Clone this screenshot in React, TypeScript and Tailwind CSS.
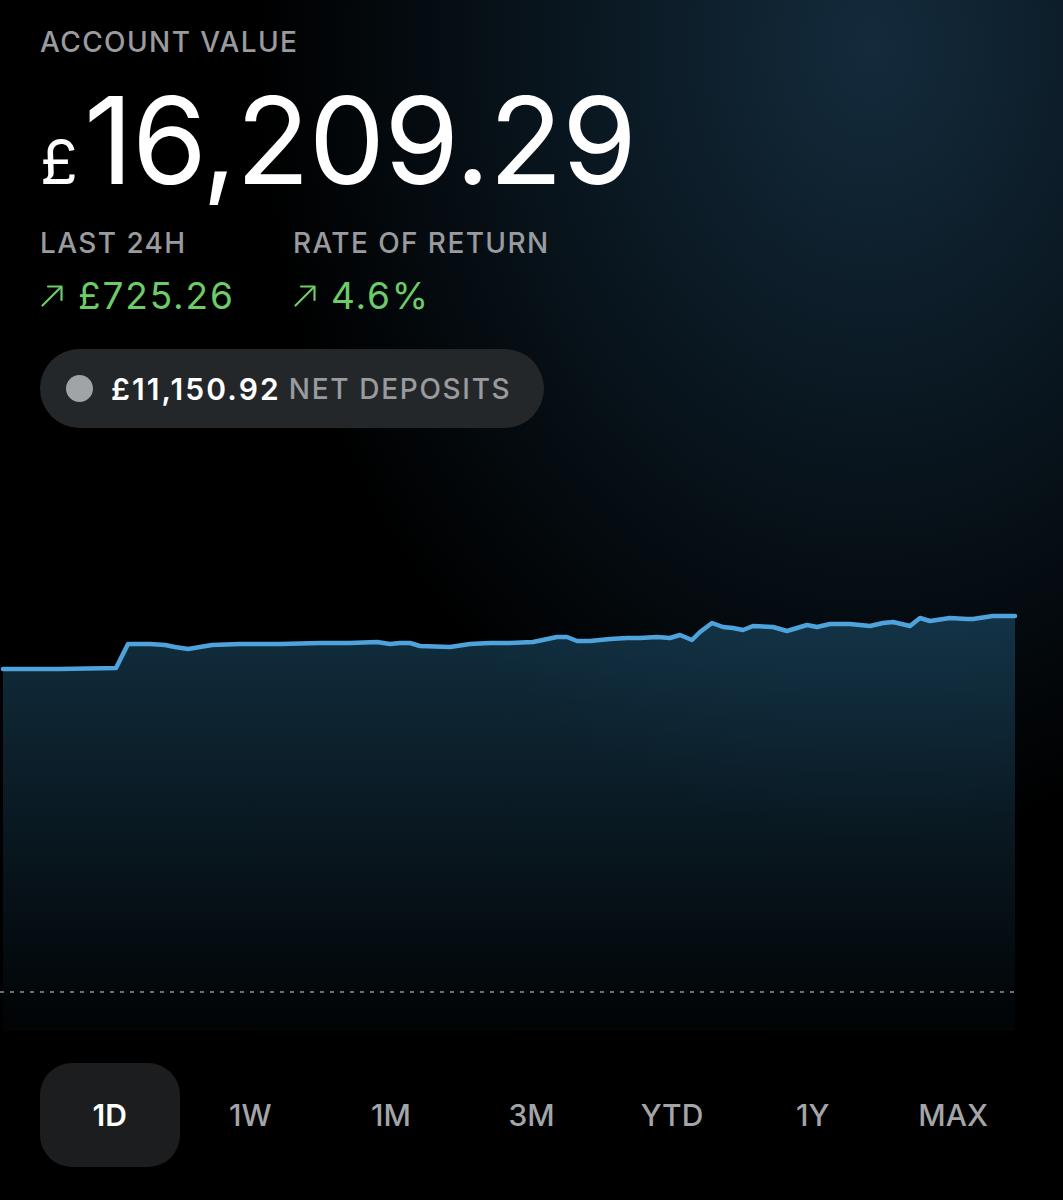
import React from "react";

const line: [number, number][] = [
  [3, 668], [60, 668], [116, 667], [128, 643], [150, 643], [165, 644], [175, 646], [188, 648],
  [200, 646], [212, 644], [240, 643], [280, 643], [320, 642], [350, 642], [377, 641], [390, 643],
  [400, 642], [410, 642], [420, 645], [450, 646], [470, 643], [490, 642], [510, 642], [533, 641],
  [557, 636], [567, 636], [577, 640], [590, 640], [610, 638], [627, 637], [640, 637], [657, 636],
  [670, 637], [680, 634], [692, 639], [700, 631], [712, 622], [723, 626], [733, 627], [743, 629],
  [753, 625], [773, 626], [787, 630], [807, 624], [817, 626], [830, 623], [850, 623], [870, 625],
  [883, 622], [893, 621], [910, 625], [920, 617], [930, 620], [950, 617], [967, 618], [973, 618],
  [993, 615], [1015, 615],
];

const pts = line.map(([x, y]) => `${x},${y}`).join(" ");
const area = `M3,1030 L${line.map(([x, y]) => `${x},${y}`).join(" L")} L1015,1030 Z`;

const Arrow = () => (
  <svg width="24" height="24" viewBox="0 0 24 24" fill="none" stroke="currentColor" strokeWidth="2.2" strokeLinecap="round" strokeLinejoin="round">
    <path d="M2.5 21.5 L21 3" />
    <path d="M8 2.5 H21.5 V16" />
  </svg>
);

const tabs = ["1D", "1W", "1M", "3M", "YTD", "1Y", "MAX"];

export default function App() {
  return (
    <div
      className="w-[1063px] h-[1200px] overflow-hidden bg-black bg-[radial-gradient(ellipse_58%_66%_at_82%_4%,#142b3c_0%,#0a1822_45%,#000_100%)] text-white"
      style={{ fontFamily: "Inter, 'Noto Sans', sans-serif" }}
    >
      <div className="pl-[40px] pt-[28px]">
        <div className="text-[28px] leading-none font-medium text-[#9a9b9e] tracking-[0.05em]">ACCOUNT VALUE</div>

        <div className="mt-[24px] flex items-baseline leading-none">
          <span className="text-[62px] mr-[6px]">£</span>
          <span className="text-[121px] tracking-[-0.008em]">16,209.29</span>
        </div>

        <div className="mt-[28px] flex">
          <div className="w-[253px]">
            <div className="text-[28px] leading-none font-medium text-[#9a9b9e] tracking-[0.05em]">LAST 24H</div>
            <div className="mt-[20px] flex items-center gap-[14px] text-[37px] leading-none text-[#6dcb68]">
              <Arrow />
              <span className="tracking-[0.05em]">£725.26</span>
            </div>
          </div>
          <div>
            <div className="text-[28px] leading-none font-medium text-[#9a9b9e] tracking-[0.05em]">RATE OF RETURN</div>
            <div className="mt-[20px] flex items-center gap-[14px] text-[37px] leading-none text-[#6dcb68]">
              <Arrow />
              <span className="tracking-[0.05em]">4.6%</span>
            </div>
          </div>
        </div>

        <div className="mt-[35px] inline-flex h-[79px] items-center rounded-full bg-[#24272a] pl-[26px] pr-[33px]">
          <span className="h-[27px] w-[27px] rounded-full bg-[#a0a3a7]" />
          <span className="ml-[18px] text-[30px] font-semibold leading-none text-white tracking-[0.07em]">£11,150.92</span>
          <span className="ml-[8px] text-[28px] font-medium leading-none text-[#9a9b9e] tracking-[0.06em]">NET DEPOSITS</span>
        </div>
      </div>

      <svg className="mt-[133px] block" width="1063" height="480" viewBox="0 560 1063 480">
        <defs>
          <linearGradient id="fill" x1="0" y1="610" x2="0" y2="1030" gradientUnits="userSpaceOnUse">
            <stop offset="0" stopColor="#1f5473" stopOpacity="0.55" />
            <stop offset="1" stopColor="#1f5473" stopOpacity="0.04" />
          </linearGradient>
        </defs>
        <path d={area} fill="url(#fill)" />
        <line x1="0" y1="991" x2="1015" y2="991" stroke="#6c7074" strokeWidth="2" strokeDasharray="4 6" />
        <polyline points={pts} fill="none" stroke="#4fa3dc" strokeWidth="4.5" strokeLinejoin="round" strokeLinecap="round" />
      </svg>

      <div className="mt-[22px] pl-[40px] grid w-[1023px] grid-cols-7 gap-[1px]">
        {tabs.map((t, i) => (
          <div
            key={t}
            className={
              i === 0
                ? "flex h-[104px] items-center justify-center rounded-[32px] bg-[#1c1d1f] text-[30px] font-semibold text-white"
                : "flex h-[104px] items-center justify-center text-[30px] font-medium text-[#a3a5a8]"
            }
          >
            {t}
          </div>
        ))}
      </div>
    </div>
  );
}
